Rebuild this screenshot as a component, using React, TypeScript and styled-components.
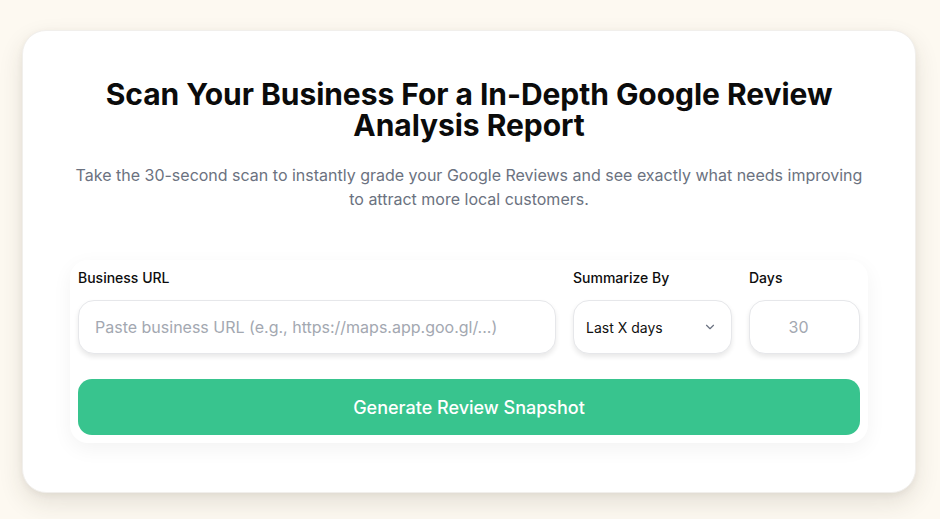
import { createGlobalStyle } from 'styled-components';
import styled from 'styled-components';

const GlobalStyle = createGlobalStyle`
    * {
        box-sizing: border-box;
    }
    body {
        margin: 0;
        background: #fdf9f1;
        font-family: Inter, 'Noto Sans', sans-serif;
        -webkit-font-smoothing: antialiased;
    }
`;

const Page = styled.div`
    padding: 30px 24px 30px 22px;
`;

const Card = styled.section`
    width: 894px;
    background: #ffffff;
    border: 1px solid #f1efec;
    border-radius: 24px;
    padding: 48px 47px 49px;
    box-shadow: 0 10px 24px rgba(60, 50, 30, 0.12), 0 2px 6px rgba(60, 50, 30, 0.06);
`;

const Title = styled.h1`
    margin: 0;
    font-size: 30px;
    line-height: 31px;
    font-weight: 700;
    color: #0b0b0b;
    text-align: center;
    letter-spacing: -0.05px;
    padding: 0 20px;
`;

const Subtitle = styled.p`
    margin: 22px 0 0;
    font-size: 16px;
    line-height: 24px;
    color: #6b7280;
    text-align: center;
`;

const FormPanel = styled.div`
    margin-top: 49px;
    padding: 8px;
    border-radius: 18px;
    background: #ffffff;
    box-shadow: 0 6px 20px rgba(0, 0, 0, 0.05);
    display: flex;
    flex-direction: column;
    gap: 25px;
`;

const Row = styled.div`
    display: grid;
    grid-template-columns: 1fr 159px 111px;
    gap: 17px;
`;

const Field = styled.div`
    display: flex;
    flex-direction: column;
    gap: 12px;
`;

const Label = styled.label`
    font-size: 14px;
    line-height: 20px;
    font-weight: 500;
    color: #0d0d0d;
`;

const Box = styled.div<{ $center?: boolean }>`
    height: 54px;
    border: 1px solid #e6e7ea;
    border-radius: 16px;
    background: #ffffff;
    box-shadow: 0 3px 5px rgba(0, 0, 0, 0.09);
    display: flex;
    align-items: center;
    justify-content: ${({ $center }) => ($center ? 'center' : 'space-between')};
    padding: ${({ $center }) => ($center ? '0 12px 0 0' : '0 16px')};
`;

const Placeholder = styled.span`
    font-size: 16px;
    color: #a3a8b1;
`;

const SelectBox = styled(Box)`
    padding: 0 12px;
`;

const SelectValue = styled.span`
    font-size: 14px;
    color: #111111;
`;

const Chevron = styled.svg`
    width: 14px;
    height: 14px;
    color: #6b7280;
    margin-right: 2px;
`;

const SubmitButton = styled.button`
    height: 56px;
    border: none;
    border-radius: 14px;
    background: #38c48e;
    color: #ffffff;
    font-family: inherit;
    font-size: 18px;
    font-weight: 500;
    cursor: pointer;
`;

export default function App() {
    return (
        <>
            <GlobalStyle />
            <Page>
                <Card>
                    <Title>Scan Your Business For a In-Depth Google Review Analysis Report</Title>
                    <Subtitle>
                        Take the 30-second scan to instantly grade your Google Reviews and see exactly what
                        needs improving to attract more local customers.
                    </Subtitle>
                    <FormPanel>
                        <Row>
                            <Field>
                                <Label>Business URL</Label>
                                <Box>
                                    <Placeholder>Paste business URL (e.g., https://maps.app.goo.gl/...)</Placeholder>
                                </Box>
                            </Field>
                            <Field>
                                <Label>Summarize By</Label>
                                <SelectBox>
                                    <SelectValue>Last X days</SelectValue>
                                    <Chevron viewBox="0 0 24 24" fill="none" stroke="currentColor" strokeWidth="2" strokeLinecap="round" strokeLinejoin="round">
                                        <path d="M6 9l6 6 6-6" />
                                    </Chevron>
                                </SelectBox>
                            </Field>
                            <Field>
                                <Label>Days</Label>
                                <Box $center>
                                    <Placeholder>30</Placeholder>
                                </Box>
                            </Field>
                        </Row>
                        <SubmitButton>Generate Review Snapshot</SubmitButton>
                    </FormPanel>
                </Card>
            </Page>
        </>
    );
}
